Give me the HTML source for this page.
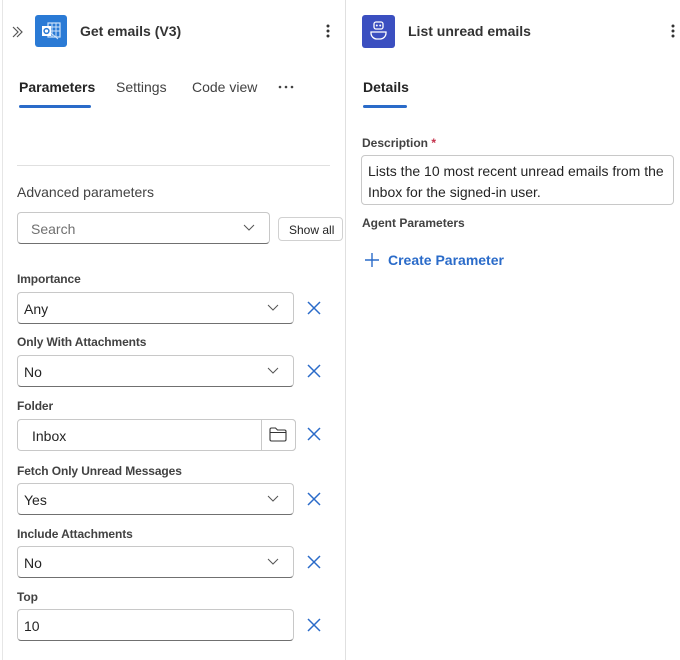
<!DOCTYPE html>
<html><head><meta charset="utf-8"><style>
*{box-sizing:border-box;margin:0;padding:0}
body{width:680px;height:660px;background:#fff;font-family:"Liberation Sans",sans-serif;color:#242424;position:relative;overflow:hidden}
.a{position:absolute}
.lbl{position:absolute;left:17px;font-size:12px;font-weight:bold;color:#424242;letter-spacing:-0.1px}
.dd{position:absolute;left:17px;width:277px;height:32px;border:1px solid #c8c8c8;border-bottom-color:#707070;border-radius:4px;font-size:14px;padding:8px 6px}
.chev{position:absolute;right:14px;top:11px}
.x{position:absolute;left:307px}
</style></head><body>
<div class="a" style="left:2px;top:0;width:1px;height:660px;background:#e6e6e6"></div>
<div class="a" style="left:345px;top:0;width:1px;height:660px;background:#e0e0e0"></div>

<svg class="a" style="left:11px;top:25px" width="14" height="14" viewBox="0 0 14 14"><path d="M2 2l5 5-5 5M6 2l5 5-5 5" fill="none" stroke="#555" stroke-width="1.2"/></svg>
<div class="a" style="left:35px;top:15px;width:32px;height:32px;background:#2a7ad5;border-radius:3px"></div>
<svg class="a" style="left:35px;top:15px" width="32" height="32" viewBox="0 0 32 32"><rect x="13" y="8" width="12" height="14" fill="none" stroke="#cfe3fa" stroke-width="1.2"/><path d="M13 12h12M13 16h12M17 8v14M21 8v14" stroke="#cfe3fa" stroke-width="1"/><rect x="7" y="11" width="9" height="10" fill="#fff"/><circle cx="11.5" cy="16" r="2.4" fill="none" stroke="#2a7ad5" stroke-width="1.5"/><path d="M16 18l7 6" stroke="#cfe3fa"/></svg>
<div class="a" style="left:80px;top:23px;font-size:14px;font-weight:bold;color:#333">Get emails (V3)</div>
<svg class="a" style="left:325px;top:23px" width="6" height="16"><circle cx="3" cy="3" r="1.5" fill="#333"/><circle cx="3" cy="8" r="1.5" fill="#333"/><circle cx="3" cy="13" r="1.5" fill="#333"/></svg>

<div class="a" style="left:19px;top:79px;font-size:14px;font-weight:bold;color:#242424">Parameters</div>
<div class="a" style="left:19px;top:105px;width:72px;height:3px;background:#2a6bc9;border-radius:2px"></div>
<div class="a" style="left:116px;top:79px;font-size:14px;color:#424242">Settings</div>
<div class="a" style="left:192px;top:79px;font-size:14px;color:#424242">Code view</div>
<svg class="a" style="left:278px;top:85px" width="16" height="4"><circle cx="2" cy="2" r="1.3" fill="#424242"/><circle cx="8" cy="2" r="1.3" fill="#424242"/><circle cx="14" cy="2" r="1.3" fill="#424242"/></svg>

<div class="a" style="left:17px;top:165px;width:313px;height:1px;background:#e0e0e0"></div>
<div class="a" style="left:17px;top:184px;font-size:14px;color:#424242">Advanced parameters</div>
<div class="dd" style="top:212px;width:253px;color:#707070;padding-left:13px">Search<svg class="chev" width="12" height="8"><path d="M1 1l5 5 5-5" fill="none" stroke="#555"/></svg></div>
<div class="a" style="left:278px;top:217px;width:65px;height:24px;border:1px solid #d1d1d1;border-radius:4px;font-size:12px;padding:5px 0 0 10px;color:#242424">Show all</div>

<div class="lbl" style="top:272px">Importance</div>
<div class="dd" style="top:292px">Any<svg class="chev" width="12" height="8"><path d="M1 1l5 5 5-5" fill="none" stroke="#555"/></svg></div>
<svg class="x" style="top:301px" width="14" height="14"><path d="M1 1l12 12M13 1L1 13" stroke="#2a6bc9" stroke-width="1.5"/></svg>

<div class="lbl" style="top:335px">Only With Attachments</div>
<div class="dd" style="top:355px">No<svg class="chev" width="12" height="8"><path d="M1 1l5 5 5-5" fill="none" stroke="#555"/></svg></div>
<svg class="x" style="top:364px" width="14" height="14"><path d="M1 1l12 12M13 1L1 13" stroke="#2a6bc9" stroke-width="1.5"/></svg>

<div class="lbl" style="top:399px">Folder</div>
<div class="dd" style="top:419px;width:279px;padding-left:14px;border-color:#c8c8c8">Inbox</div>
<div class="a" style="left:261px;top:419px;width:35px;height:32px;border:1px solid #c8c8c8;border-radius:0 4px 4px 0;background:#fff"></div>
<svg class="a" style="left:268px;top:426px" width="20" height="18" viewBox="0 0 20 18"><path d="M2 3.5q0-1.5 1.5-1.5h4l2 2h7q1.5 0 1.5 1.5v8q0 1.5-1.5 1.5h-13q-1.5 0-1.5-1.5zM2 6.5h16" fill="none" stroke="#333" stroke-width="1.1"/></svg>
<svg class="x" style="top:427px" width="14" height="14"><path d="M1 1l12 12M13 1L1 13" stroke="#2a6bc9" stroke-width="1.5"/></svg>

<div class="lbl" style="top:464px">Fetch Only Unread Messages</div>
<div class="dd" style="top:483px">Yes<svg class="chev" width="12" height="8"><path d="M1 1l5 5 5-5" fill="none" stroke="#555"/></svg></div>
<svg class="x" style="top:492px" width="14" height="14"><path d="M1 1l12 12M13 1L1 13" stroke="#2a6bc9" stroke-width="1.5"/></svg>

<div class="lbl" style="top:527px">Include Attachments</div>
<div class="dd" style="top:546px">No<svg class="chev" width="12" height="8"><path d="M1 1l5 5 5-5" fill="none" stroke="#555"/></svg></div>
<svg class="x" style="top:555px" width="14" height="14"><path d="M1 1l12 12M13 1L1 13" stroke="#2a6bc9" stroke-width="1.5"/></svg>

<div class="lbl" style="top:590px">Top</div>
<div class="dd" style="top:609px">10</div>
<svg class="x" style="top:618px" width="14" height="14"><path d="M1 1l12 12M13 1L1 13" stroke="#2a6bc9" stroke-width="1.5"/></svg>

<!-- right -->
<div class="a" style="left:362px;top:15px;width:33px;height:33px;background:#3b4fc0;border-radius:3px"></div>
<svg class="a" style="left:362px;top:15px" width="33" height="33" viewBox="0 0 33 33"><rect x="12" y="7" width="9" height="7" rx="2" fill="none" stroke="#fff" stroke-width="1.3"/><circle cx="14.8" cy="10.5" r="1" fill="#fff"/><circle cx="18.2" cy="10.5" r="1" fill="#fff"/><path d="M9 17h15v1a6 6 0 0 1-6 6h-3a6 6 0 0 1-6-6z" fill="none" stroke="#fff" stroke-width="1.3"/></svg>
<div class="a" style="left:408px;top:23px;font-size:14px;font-weight:bold;color:#333">List unread emails</div>
<svg class="a" style="left:670px;top:23px" width="6" height="16"><circle cx="3" cy="3" r="1.5" fill="#333"/><circle cx="3" cy="8" r="1.5" fill="#333"/><circle cx="3" cy="13" r="1.5" fill="#333"/></svg>
<div class="a" style="left:363px;top:79px;font-size:14px;font-weight:bold">Details</div>
<div class="a" style="left:363px;top:105px;width:44px;height:3px;background:#2a6bc9;border-radius:2px"></div>

<div class="a" style="left:362px;top:136px;font-size:12px;font-weight:bold;color:#424242">Description <span style="color:#c4314b">*</span></div>
<div class="a" style="left:361px;top:155px;width:313px;height:50px;border:1px solid #c8c8c8;border-radius:4px;font-size:14px;line-height:21px;padding:5px 6px;color:#242424">Lists the 10 most recent unread emails from the Inbox for the signed-in user.</div>
<div class="a" style="left:362px;top:216px;font-size:12px;font-weight:bold;color:#424242">Agent Parameters</div>
<svg class="a" style="left:364px;top:252px" width="16" height="16"><path d="M8 1v14M1 8h14" stroke="#2a6bc9" stroke-width="1.4"/></svg>
<div class="a" style="left:388px;top:252px;font-size:14px;font-weight:bold;color:#2a6bc9">Create Parameter</div>
</body></html>
